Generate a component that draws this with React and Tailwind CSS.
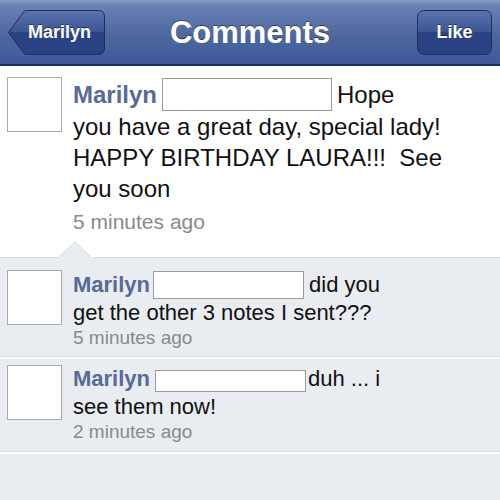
import React from "react";

function Box({ w, h }) {
  return (
    <span
      className="inline-block bg-white border border-[#9a9a9a] align-middle"
      style={{ width: w, height: h }}
    />
  );
}

function Avatar() {
  return <div className="w-[55px] h-[55px] shrink-0 bg-white border border-[#a9a9a9]" />;
}

export default function App() {
  return (
    <div className="w-[500px] h-[500px] overflow-hidden bg-[#e9ecf0] font-['Liberation_Sans',Arial,sans-serif]">
      {/* Nav bar */}
      <div className="relative h-[66px] flex items-center justify-between px-[8px] bg-[linear-gradient(#8a9dc6_0%,#6a82b6_8%,#50699f_50%,#3e5a98_100%)] border-b-2 border-[#1e2f5c]">
        <div className="relative w-[97px] h-[45px] flex items-center justify-center pl-[6px]">
          <svg className="absolute inset-0" width="97" height="45" viewBox="0 0 97 45">
            <defs>
              <linearGradient id="bb" x1="0" y1="0" x2="0" y2="1">
                <stop offset="0" stopColor="#5a73ac" />
                <stop offset="0.5" stopColor="#3b5594" />
                <stop offset="0.5" stopColor="#2b4384" />
                <stop offset="1" stopColor="#2a4284" />
              </linearGradient>
            </defs>
            <path
              d="M0.5 22.5 L16 1.5 Q17 0.5 19 0.5 L90 0.5 Q96.5 0.5 96.5 7 L96.5 38 Q96.5 44.5 90 44.5 L19 44.5 Q17 44.5 16 43.5 Z"
              fill="url(#bb)"
              stroke="#1d2f5e"
              strokeWidth="1"
            />
          </svg>
          <span className="relative text-white font-bold text-[18px] leading-none [text-shadow:0_-1px_0_rgba(0,0,0,0.45)]">
            Marilyn
          </span>
        </div>
        <div className="absolute left-0 right-0 top-0 h-[64px] flex items-center justify-center pointer-events-none">
          <span className="text-white font-bold text-[31px] leading-none [text-shadow:0_-1px_0_rgba(0,0,0,0.45)]">
            Comments
          </span>
        </div>
        <div className="w-[75px] h-[45px] rounded-[7px] border border-[#1d2f5e] bg-[linear-gradient(#5a73ac_0%,#3b5594_50%,#2b4384_50%,#2a4284_100%)] flex items-center justify-center">
          <span className="text-white font-bold text-[18px] leading-none [text-shadow:0_-1px_0_rgba(0,0,0,0.45)]">
            Like
          </span>
        </div>
      </div>

      {/* First comment */}
      <div className="relative bg-white flex pl-[7px] pt-[11px] pb-[21px] border-b border-[#d6d9df]">
        <Avatar />
        <div className="ml-[11px] text-[24px] leading-[31px] text-[#111]">
          <div className="flex items-center">
            <span className="font-bold text-[#576b95]">Marilyn</span>
            <span className="ml-[5px]"><Box w={170} h={33} /></span>
            <span className="ml-[5px]">Hope</span>
          </div>
          <div>you have a great day, special lady!</div>
          <div className="whitespace-pre">HAPPY BIRTHDAY LAURA!!!  See</div>
          <div>you soon</div>
          <div className="mt-[4px] text-[21px] leading-[28px] text-[#8a8a8a]">5 minutes ago</div>
        </div>
        <svg className="absolute left-[58px] bottom-[-1px]" width="36" height="17" viewBox="0 0 36 17">
          <path d="M0 17 L17 1 L34 17 Z" fill="#e9ecf0" stroke="#d6d9df" strokeWidth="1" />
          <rect x="0" y="16" width="36" height="1" fill="#e9ecf0" />
        </svg>
      </div>

      {/* Second comment */}
      <div className="flex pl-[7px] pt-[12px] pb-[7px] border-b border-[#d9dce1]">
        <Avatar />
        <div className="ml-[11px] text-[22px] leading-[28px] text-[#111]">
          <div className="flex items-center">
            <span className="font-bold text-[#576b95]">Marilyn</span>
            <span className="ml-[3px]"><Box w={151} h={28} /></span>
            <span className="ml-[5px]">did you</span>
          </div>
          <div>get the other 3 notes I sent???</div>
          <div className="text-[19px] leading-[22px] text-[#8a8a8a]">5 minutes ago</div>
        </div>
      </div>
      <div className="h-[2px] bg-white" />

      {/* Third comment */}
      <div className="flex pl-[7px] pt-[6px] pb-[8px] border-b border-[#d9dce1]">
        <Avatar />
        <div className="ml-[11px] text-[22px] leading-[28px] text-[#111]">
          <div className="flex items-center">
            <span className="font-bold text-[#576b95]">Marilyn</span>
            <span className="ml-[5px]"><Box w={151} h={22} /></span>
            <span className="ml-[2px]">duh ... i</span>
          </div>
          <div>see them now!</div>
          <div className="text-[19px] leading-[22px] text-[#8a8a8a]">2 minutes ago</div>
        </div>
      </div>
      <div className="h-[2px] bg-white" />
    </div>
  );
}
